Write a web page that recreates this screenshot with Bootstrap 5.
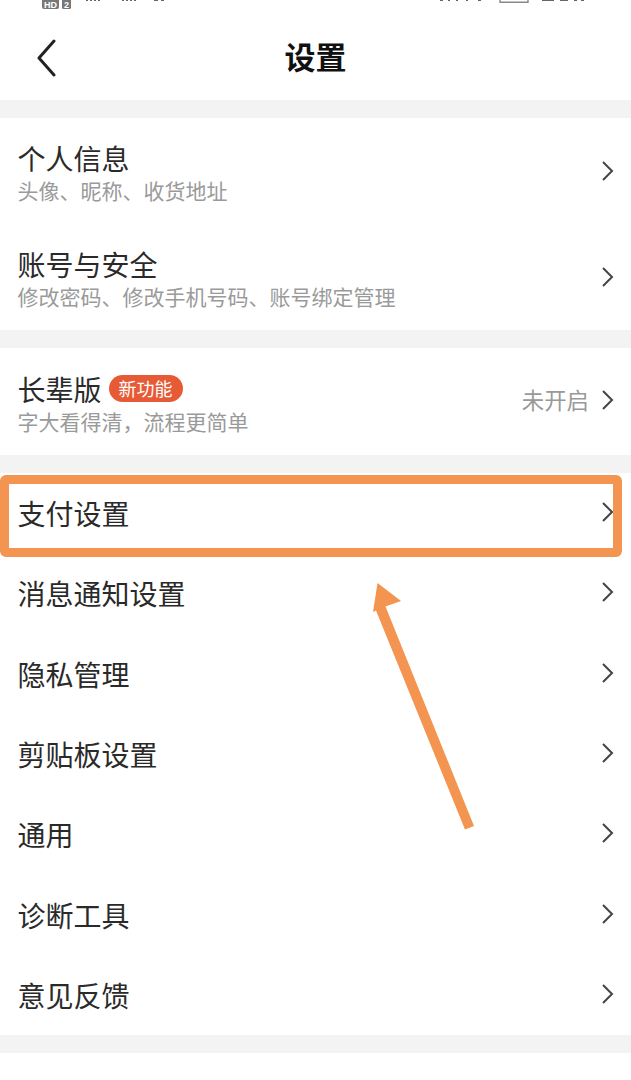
<!doctype html>
<html lang="zh"><head><meta charset="utf-8">
<link rel="stylesheet" href="https://cdn.jsdelivr.net/npm/bootstrap@5.3.0/dist/css/bootstrap.min.css">
<style>
html,body{margin:0;background:#fff}
body{font-family:"Noto Sans CJK SC","Noto Sans",sans-serif;color:#222;position:relative;height:1080px;overflow:hidden}
.sbar{height:20px;padding:0 46px 0 42px;overflow:hidden}
.sbar svg{display:block}
.sbar text{font-family:"Liberation Sans",sans-serif;font-size:9px;font-weight:700;fill:#fff}
.topbar{height:80px;padding:0 0 4px 36px}
.topbar-title{font-size:31px;font-weight:700;color:#111;left:0;right:0;top:50%;transform:translateY(-50%);margin-top:-5px;line-height:1}
.gapband{height:18px;background:#f3f3f3}
.set-row{padding:0 18px 0 17.500px;gap:10px}
.set-row.tall{height:106px}
.set-row.tall2{height:107px}
.set-row.plain{height:80.300px}
.set-row.plain>.chev{margin-bottom:2px}
.set-row .set-block{padding-top:2px}
.set-name{font-size:28px;line-height:34px;color:#2a2a2a;font-weight:400}
.set-sub{font-size:21px;line-height:26px;color:#9a9a9a;margin-top:2px}
.new-tag{background:#e65a35;color:#fff;font-size:18px;line-height:27px;height:27px;padding:0 10px;border-radius:14px;margin-left:7px}
.set-val{font-size:22.400px;color:#999;line-height:30px;margin-right:12px;margin-bottom:2px}
.val-wrap{margin-bottom:4px}
.chev{flex:none;margin-right:-1px}
.hl-box{position:absolute;left:0;top:475px;width:622px;height:82px;border:9px solid #f39450;border-radius:6px;pointer-events:none}
.hl-arrow{position:absolute;left:0;top:0;pointer-events:none}
</style></head>
<body>
<div class="sbar d-flex justify-content-between">
<svg width="130" height="10" viewBox="0 0 130 10"><rect x="0" y="-4" width="17" height="13" rx="2" fill="#777"/><rect x="20" y="-4" width="9" height="13" rx="1.500" fill="#777"/><text x="2" y="8" textLength="13">HD</text><text x="22" y="8">2</text><g fill="#666"><rect x="44" y="-3" width="2" height="4"/><rect x="48" y="-3" width="2" height="4"/><rect x="52" y="-3" width="2" height="4"/><rect x="56" y="-3" width="2" height="4"/><rect x="80" y="-3" width="2" height="4"/><rect x="84" y="-3" width="2" height="4"/><rect x="88" y="-3" width="2" height="4"/><rect x="92" y="-3" width="2" height="4"/><rect x="112" y="-3" width="4" height="4"/><rect x="119" y="-3" width="3" height="4"/></g></svg>
<svg width="145" height="6" viewBox="0 0 145 6"><g fill="#666"><rect x="0" y="-3" width="3" height="4"/><rect x="8" y="-3" width="2" height="4"/><rect x="16" y="-3" width="2" height="4"/><rect x="26" y="-3" width="2" height="4"/><rect x="38" y="-3" width="3" height="4"/><rect x="102" y="-3" width="12" height="4"/><rect x="120" y="-3" width="8" height="4"/><rect x="134" y="-3" width="3" height="4"/><rect x="141" y="-3" width="3" height="4"/></g><path d="M60 -3V2.200H88V-3" fill="none" stroke="#888" stroke-width="1.400"/></svg>
</div>
<div class="topbar position-relative d-flex align-items-center">
<svg width="22" height="38" viewBox="0 0 22 38"><path d="M18 2 3 19 18 36" fill="none" stroke="#222" stroke-width="3" stroke-linecap="round" stroke-linejoin="round"/></svg>
<div class="topbar-title position-absolute text-center">设置</div>
</div>
<div class="gapband"></div>
<div class="set-row tall d-flex align-items-center justify-content-between"><div class="set-block"><div class="set-name">个人信息</div><div class="set-sub">头像、昵称、收货地址</div></div><svg class="chev" width="13" height="22" viewBox="0 0 13 22"><path d="M2 2 11 11 2 20" fill="none" stroke="#444" stroke-width="2"/></svg></div>
<div class="set-row tall d-flex align-items-center justify-content-between"><div class="set-block"><div class="set-name">账号与安全</div><div class="set-sub">修改密码、修改手机号码、账号绑定管理</div></div><svg class="chev" width="13" height="22" viewBox="0 0 13 22"><path d="M2 2 11 11 2 20" fill="none" stroke="#444" stroke-width="2"/></svg></div>
<div class="gapband"></div>
<div class="set-row tall2 d-flex align-items-center justify-content-between"><div class="set-block"><div class="d-flex align-items-center"><span class="set-name">长辈版</span><span class="new-tag">新功能</span></div><div class="set-sub">字大看得清，流程更简单</div></div><div class="val-wrap d-flex align-items-center"><span class="set-val">未开启</span><svg class="chev" width="13" height="22" viewBox="0 0 13 22"><path d="M2 2 11 11 2 20" fill="none" stroke="#444" stroke-width="2"/></svg></div></div>
<div class="gapband"></div>
<div class="set-row plain d-flex align-items-center justify-content-between"><div class="set-name">支付设置</div><svg class="chev" width="13" height="22" viewBox="0 0 13 22"><path d="M2 2 11 11 2 20" fill="none" stroke="#444" stroke-width="2"/></svg></div>
<div class="set-row plain d-flex align-items-center justify-content-between"><div class="set-name">消息通知设置</div><svg class="chev" width="13" height="22" viewBox="0 0 13 22"><path d="M2 2 11 11 2 20" fill="none" stroke="#444" stroke-width="2"/></svg></div>
<div class="set-row plain d-flex align-items-center justify-content-between"><div class="set-name">隐私管理</div><svg class="chev" width="13" height="22" viewBox="0 0 13 22"><path d="M2 2 11 11 2 20" fill="none" stroke="#444" stroke-width="2"/></svg></div>
<div class="set-row plain d-flex align-items-center justify-content-between"><div class="set-name">剪贴板设置</div><svg class="chev" width="13" height="22" viewBox="0 0 13 22"><path d="M2 2 11 11 2 20" fill="none" stroke="#444" stroke-width="2"/></svg></div>
<div class="set-row plain d-flex align-items-center justify-content-between"><div class="set-name">通用</div><svg class="chev" width="13" height="22" viewBox="0 0 13 22"><path d="M2 2 11 11 2 20" fill="none" stroke="#444" stroke-width="2"/></svg></div>
<div class="set-row plain d-flex align-items-center justify-content-between"><div class="set-name">诊断工具</div><svg class="chev" width="13" height="22" viewBox="0 0 13 22"><path d="M2 2 11 11 2 20" fill="none" stroke="#444" stroke-width="2"/></svg></div>
<div class="set-row plain d-flex align-items-center justify-content-between"><div class="set-name">意见反馈</div><svg class="chev" width="13" height="22" viewBox="0 0 13 22"><path d="M2 2 11 11 2 20" fill="none" stroke="#444" stroke-width="2"/></svg></div>
<div class="gapband"></div>
<div class="hl-box"></div>
<svg class="hl-arrow" width="631" height="1080" viewBox="0 0 631 1080"><path d="M377.500 583 401 601 385.500 606.500 474 826 465 829.600 376 610.500 373 612Z" fill="#f39450"/></svg>
</body></html>
